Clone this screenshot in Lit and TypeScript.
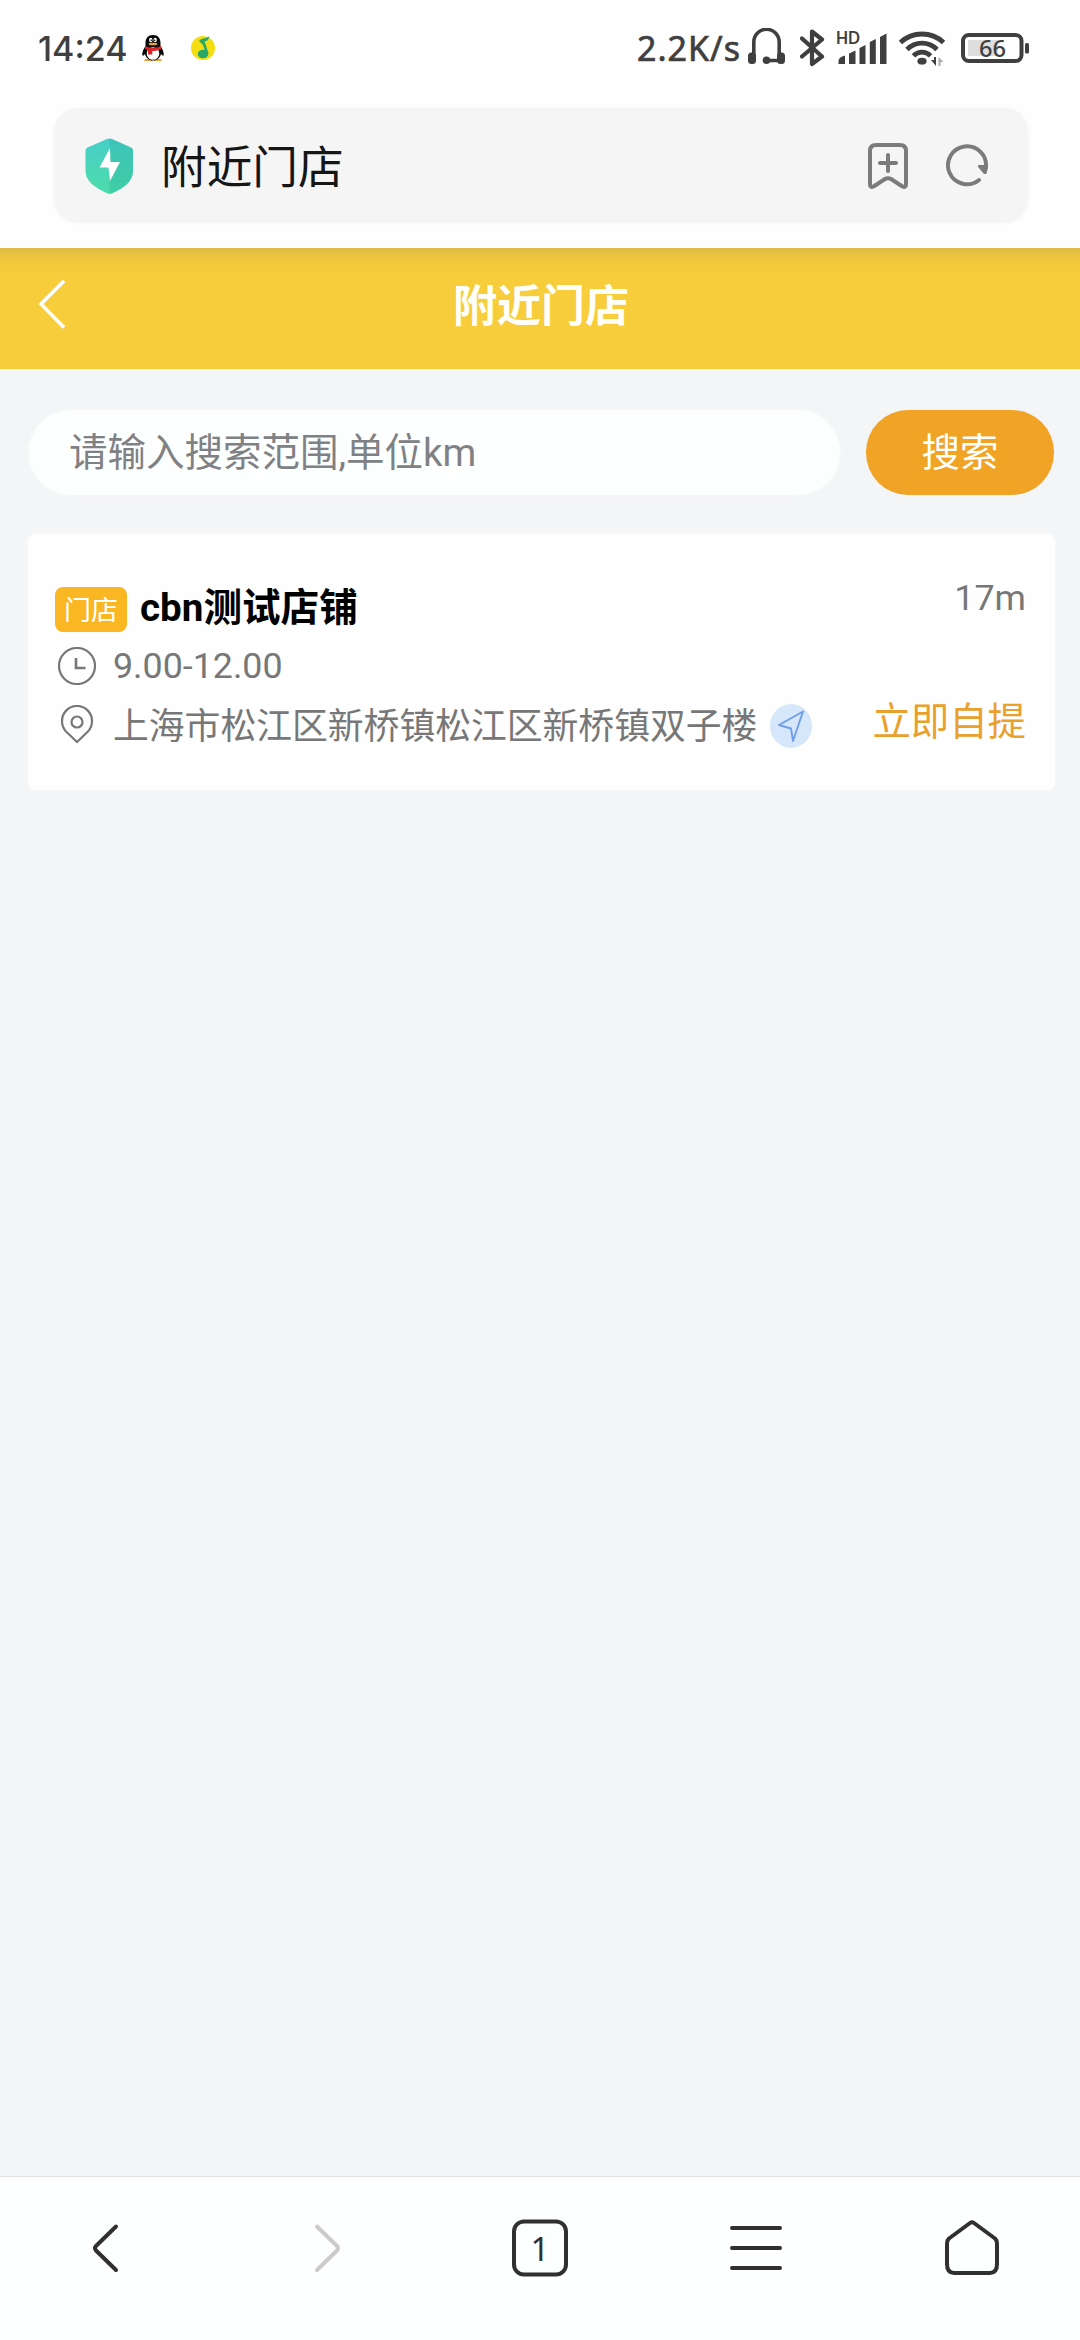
import { LitElement, html, css, svg } from "lit";
import { customElement, property } from "lit/decorators.js";

const FONT = css`Roboto, "Noto Sans CJK SC", sans-serif`;

@customElement("status-bar")
class StatusBar extends LitElement {
  static styles = css`
    :host { display: flex; height: 108px; box-sizing: border-box; padding: 28px 51px 0 38px; justify-content: space-between; align-items: flex-start; color: #3f3f3f; }
    .side { display: flex; height: 40px; }
    .time { font: 500 34px/41px Inter, sans-serif; width: 104px; white-space: nowrap; }
    .rate { font: 400 34px/41px "Noto Sans", sans-serif; width: 111px; white-space: nowrap; letter-spacing: 1px; -webkit-text-stroke: 0.7px #3f3f3f; }
    .music { margin-left: 27px; }
    .bt { margin-left: 15px; }
    .signal { margin-left: 11px; }
    .wifi { margin-left: 12px; }
    .battery { margin-left: 16px; }
    .small { font: 700 16.5px Lato, sans-serif; fill: #3f3f3f; }
    .level { font: 500 23px "Noto Sans", sans-serif; fill: #3f3f3f; }
    svg { display: block; flex: none; }
  `;
  render() {
    return html`
      <div class="side">
        <span class="time">14:24</span>
        <svg width="22" height="40" viewBox="0 0 22 40">
          <path d="M3 31h7v2H2zM12 31h7l1 2h-8z" fill="#e8a33a" />
          <path d="M11 7c-5 0-7.500 3.500-7.500 8v3C1.500 21 0 24 .3 27.500c1 .5 2-.5 2.700-1.500 1 4 4 6.500 8 6.500s7-2.500 8-6.500c.7 1 1.700 2 2.700 1.500.3-3.500-1.200-6.500-3.200-9.500v-3C18.500 10.500 16 7 11 7z" fill="#080808" />
          <ellipse cx="11" cy="25.500" rx="6.300" ry="6.300" fill="#fff" />
          <ellipse cx="8.800" cy="12" rx="1.700" ry="2.300" fill="#fff" /><ellipse cx="13.200" cy="12" rx="1.700" ry="2.300" fill="#fff" />
          <circle cx="9.300" cy="12.300" r=".8" /><circle cx="12.700" cy="12.300" r=".8" />
          <ellipse cx="11" cy="16" rx="4.500" ry="1.300" fill="#e8a33a" />
          <path d="M3 18c5 2.500 11 2.500 16 0l.3 3c-3 1.500-6 2-9 2v3.500H6V22l-3-1z" fill="#d8272b" />
        </svg>
        <svg class="music" width="24" height="40" viewBox="0 0 24 40">
          <circle cx="12" cy="20" r="12" fill="#f4dd12" />
          <ellipse cx="12" cy="26" rx="5.300" ry="4.300" fill="#27a867" />
          <path d="M8 13c2-3.500 8-2 10.500-5-.5 3.500-2.500 5-5 5.500L17.500 25l-2.500 1-3-9z" fill="#27a867" />
        </svg>
      </div>
      <div class="side">
        <span class="rate">2.2K/s</span>
        <svg width="37" height="40" viewBox="0 0 37 40">
          <path d="M5.800 28V14a12.700 12.700 0 0 1 25.400 0v14M18 32.500h14" fill="none" stroke="#3f3f3f" stroke-width="3.600" />
          <rect x="0" y="24.500" width="8" height="11.500" rx="3.500" fill="#3f3f3f" /><rect x="29" y="24.500" width="8" height="11.500" rx="3.500" fill="#3f3f3f" />
          <circle cx="18.500" cy="32.300" r="3.800" fill="#3f3f3f" />
        </svg>
        <svg class="bt" width="25" height="40" viewBox="0 0 25 40">
          <path d="M2 10.500L22 28.500 12 36V3.500L22 11.500 2 28.500" fill="none" stroke="#3f3f3f" stroke-width="4.200" stroke-linejoin="round" stroke-linecap="round" />
        </svg>
        <svg class="signal" width="51" height="40" viewBox="0 0 51 40">
          <text class="small" x="0" y="16" textLength="24" lengthAdjust="spacingAndGlyphs">HD</text>
          <path d="M2.500 33q0-4 6.500-5.500V36H2.500zM13 25.500l6.500-3V36H13zM23.500 20l6-3V36h-6zM33.800 14l6-3V36h-6zM44 9l6.500-3.500V36H44z" fill="#3f3f3f" />
        </svg>
        <svg class="wifi" width="46" height="40" viewBox="0 0 46 40">
          <g fill="none" stroke="#3f3f3f" stroke-width="4.800">
            <path d="M1.500 14.500a31.500 31.500 0 0 1 43 0" /><path d="M8 21.500a21 21 0 0 1 30 0" /><path d="M14.500 27.800a11.500 11.500 0 0 1 17 0" />
          </g>
          <ellipse cx="23" cy="33.200" rx="4.600" ry="3.400" fill="#3f3f3f" />
          <path d="M37 29v9l-5-6h3v-3z" fill="#3f3f3f" /><path d="M39.500 38v-9l5 5h-3v4z" fill="#aaa" />
        </svg>
        <svg class="battery" width="68" height="40" viewBox="0 0 68 40">
          <rect x="2" y="7" width="58.500" height="26" rx="6" fill="none" stroke="#3f3f3f" stroke-width="4" />
          <rect x="7" y="12" width="30" height="16" rx="1" fill="#dedede" />
          <rect x="64" y="15" width="4" height="10.500" rx="1.500" fill="#3f3f3f" />
          <text class="level" x="18" y="28.500" textLength="27" lengthAdjust="spacingAndGlyphs">66</text>
        </svg>
      </div>`;
  }
}

@customElement("address-bar")
class AddressBar extends LitElement {
  static styles = css`
    :host { display: block; height: 140px; padding: 0 52px 0 54px; box-sizing: border-box; }
    .bar { height: 115px; border-radius: 24px; background: #f5f5f6; display: flex; align-items: center; padding: 0 39px 0 31px; box-sizing: border-box; box-shadow: 0 0 4px #f7f7f7; }
    .name { flex: 1; margin-left: 27px; font: 400 45.700px/60px ${FONT}; color: #161616; padding-top: 7px; }
    .reload { margin-left: 38px; }
    svg { display: block; flex: none; }
  `;
  render() {
    return html`
      <div class="bar">
        <svg width="49" height="56" viewBox="0 0 49 56">
          <defs><linearGradient id="g" x1="0" y1="0" x2="0" y2="1"><stop offset="0" stop-color="#48cec8" /><stop offset="1" stop-color="#4cdcaa" /></linearGradient></defs>
          <path d="M22 1q2.500-1 5 0l19 8.500q2 1 2 3V33c0 10-9 17.500-21.500 22.500q-2 .8-4 0C10 50 .5 43 .5 33V12.500q0-2 2-3z" fill="url(#g)" />
          <path d="M24.500.5q1 0 2.500.5l19 8.500q2 1 2 3V33c0 10-9 17.500-21.500 22.500l-2 .4z" fill="#22a894" opacity=".28" />
          <path d="M25 10L14.500 29.500h9L25 43l10-19h-9.500z" fill="#fff" />
        </svg>
        <span class="name">附近门店</span>
        <svg width="40" height="46" viewBox="0 0 40 46">
          <path d="M8 2h24q6 0 6 6v33q0 4-3.500 2.500L23 36q-3-1.700-6 0L5.500 43.500Q2 45 2 41V8q0-6 6-6zM20 12v16M12 20h16" fill="none" stroke="#7b7b7b" stroke-width="4" stroke-linecap="round" stroke-linejoin="round" />
        </svg>
        <svg class="reload" width="43" height="46" viewBox="0 0 43 46">
          <path d="M33 37A19 19 0 1 1 39.800 25" fill="none" stroke="#7b7b7b" stroke-width="4" stroke-linecap="round" />
          <path d="M32.500 22q-1.500 1 0 2.500l5 6q1.500 1.200 3 0l1-4V22z" fill="#7b7b7b" />
        </svg>
      </div>`;
  }
}

@customElement("page-header")
class PageHeader extends LitElement {
  @property() heading = "";
  static styles = css`
    :host { display: grid; grid-template-columns: 101px 1fr 99px; height: 121px; background: linear-gradient(#dfba48 0, #ebc23c 7px, #f4ca3c 17px, #f7cd3b 30px); align-items: center; box-sizing: border-box; padding-bottom: 4px; }
    .back { display: block; margin: 0 0 6px 38px; }
    .title { text-align: center; font: 700 44px/60px ${FONT}; color: #fffef8; }
  `;
  render() {
    return html`
      <svg class="back" width="29" height="50" viewBox="0 0 29 50"><path d="M26 2L3 25l23 23.500" fill="none" stroke="#fff" stroke-width="3.600" /></svg>
      <span class="title">${this.heading}</span>`;
  }
}

@customElement("range-search")
class RangeSearch extends LitElement {
  static styles = css`
    :host { display: flex; justify-content: space-between; padding: 41px 26px 0 29px; font: 400 38.500px/85px ${FONT}; }
    .field { width: 811px; height: 85px; border-radius: 43px; background: #fdfefe; box-sizing: border-box; padding-left: 40px; color: #808184; box-shadow: 0 0 4px #fafbfc; }
    .button { width: 188px; height: 85px; border-radius: 42px; background: #f0a325; color: #fff; text-align: center; }
    .label { display: block; }
  `;
  render() {
    return html`<div class="field"><span class="label">请输入搜索范围,单位km</span></div><div class="button"><span class="label">搜索</span></div>`;
  }
}

@customElement("store-card")
class StoreCard extends LitElement {
  @property() name = "";
  @property() hours = "";
  @property() address = "";
  @property() distance = "";
  static styles = css`
    :host { display: flex; justify-content: space-between; margin: 39px 25px 0 28px; height: 256px; box-sizing: border-box; padding: 44px 29px 0 27px; border-radius: 8px; background: #fefefe; box-shadow: 0 0 5px #fafbfc; color: #777; font: 400 35.800px/56px ${FONT}; }
    .row { display: flex; align-items: center; white-space: nowrap; }
    .head { height: 60px; }
    .tag { width: 72px; height: 45px; margin-top: 3px; border-radius: 8px; background: #fbb624; color: #fff; font-size: 27px; line-height: 49px; text-align: center; }
    .name { margin-left: 13px; font-weight: 700; font-size: 38.600px; color: #000; }
    .time { height: 56px; }
    .place { height: 62px; }
    .address { padding-top: 4px; }
    .icon { display: block; flex: none; margin: 0 17px 0 3px; }
    .nav { display: block; flex: none; margin: 2px 0 0 12px; }
    .aside { display: flex; flex-direction: column; justify-content: space-between; align-items: flex-end; height: 172px; }
    .pickup { color: #e9a02c; font-size: 38.400px; }
    .dist { margin-top: -8px; }
  `;
  render() {
    return html`
      <div>
        <div class="row head"><span class="tag">门店</span><span class="name">${this.name}</span></div>
        <div class="row time">
          <svg class="icon" width="38" height="38" viewBox="0 0 38 38"><circle cx="19" cy="19" r="18" fill="none" stroke="#777" stroke-width="2.200" /><path d="M18 11v10h9.500" fill="none" stroke="#777" stroke-width="2.600" /></svg>
          <span>${this.hours}</span>
        </div>
        <div class="row place">
          <svg class="icon" width="38" height="40" viewBox="0 0 38 40"><path d="M19 37L8 26.500A15 15 0 0 1 4 16a15 15 0 0 1 30 0 15 15 0 0 1-4 10.500z" fill="none" stroke="#777" stroke-width="2.200" /><circle cx="19" cy="17" r="5.500" fill="none" stroke="#777" stroke-width="2.200" /></svg>
          <span class="address">${this.address}</span>
          <svg class="nav" width="44" height="46" viewBox="0 0 44 46"><ellipse cx="22" cy="23" rx="21" ry="22" fill="#d6e7fc" /><path d="M34 8.500L10 22l12 3.500L24 38z" fill="none" stroke="#6f9fe8" stroke-width="1.900" stroke-linejoin="round" /></svg>
        </div>
      </div>
      <div class="aside"><span class="dist">${this.distance}</span><span class="pickup">立即自提</span></div>`;
  }
}

@customElement("browser-nav")
class BrowserNav extends LitElement {
  static styles = css`
    :host { display: grid; grid-template-columns: repeat(5, 1fr); justify-items: center; height: 164px; box-sizing: border-box; border-top: 1px solid #e2e2e4; background: #fdfefe; padding-top: 39px; }
    .icon { display: block; fill: none; stroke: #303030; stroke-width: 4; stroke-linecap: round; stroke-linejoin: round; }
    .off { stroke: #cbcbcb; }
    .count { font: 400 33px "Noto Sans", sans-serif; fill: #303030; stroke: none; }
  `;
  render() {
    const icons = [
      svg`<path d="M40 10.500L20 30q-2 2 0 4.500L40 54" />`,
      svg`<path class="off" d="M25 10.500L45 30q2 2 0 4.500L25 54" />`,
      svg`<rect x="6" y="5.500" width="52" height="53" rx="10" /><text class="count" x="22.500" y="45">1</text>`,
      svg`<path d="M8 12h48M8 32h48M8 52h48" />`,
      svg`<path d="M34 7l21 15.500q2 2 2 5V48q0 9-7 9H14q-7 0-7-9V27.500q0-3 2-5L30 7q2-1.500 4 0z" />`,
    ];
    return html`${icons.map((i) => html`<svg class="icon" width="64" height="64" viewBox="0 0 64 64">${i}</svg>`)}`;
  }
}

@customElement("app-root")
class AppRoot extends LitElement {
  static styles = css`
    :host { display: flex; flex-direction: column; width: 1080px; height: 2340px; background: #fefefe; }
    .page { flex: 1; background: #f4f5f7; }
  `;
  render() {
    return html`
      <status-bar></status-bar>
      <address-bar></address-bar>
      <main class="page">
        <page-header heading="附近门店"></page-header>
        <range-search></range-search>
        <store-card name="cbn测试店铺" hours="9.00-12.00" address="上海市松江区新桥镇松江区新桥镇双子楼" distance="17m"></store-card>
      </main>
      <browser-nav></browser-nav>`;
  }
}
